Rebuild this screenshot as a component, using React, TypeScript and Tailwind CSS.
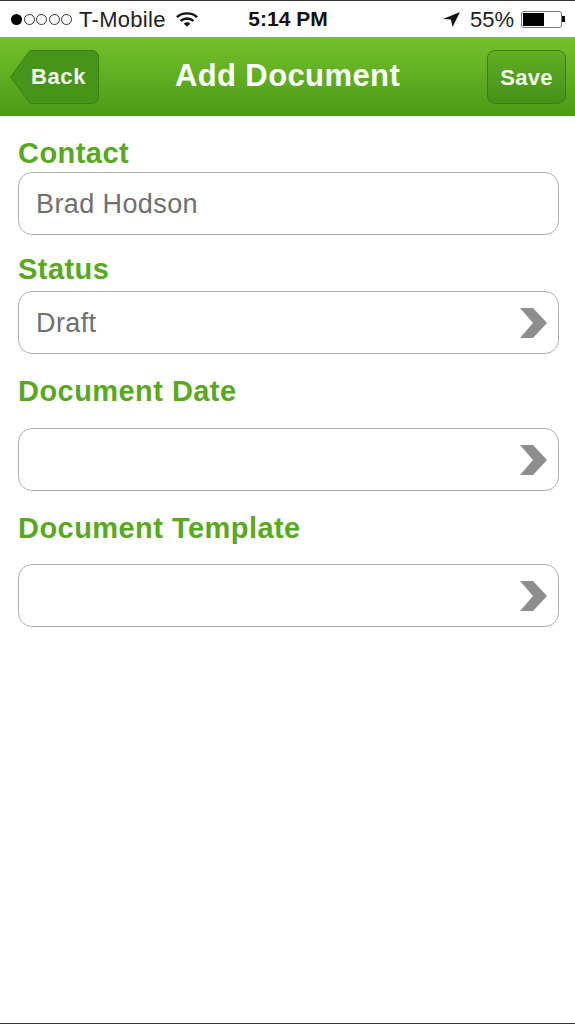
import { ReactNode } from "react";

function Chevron() {
  return (
    <svg width="27" height="30" viewBox="0 0 27 30" className="shrink-0">
      <path d="M0 0H13L27 15L13 30H0L13 15Z" fill="#8e8e8e" />
    </svg>
  );
}

function Field({ children, arrow }: { children?: ReactNode; arrow?: boolean }) {
  return (
    <div className="mx-[18px] flex h-[63px] w-[541px] items-center justify-between rounded-[14px] border border-[#b0b0b0] bg-white pl-[17px] pr-[11px] text-[27px] tracking-[0.4px] text-[#6f6f6f]">
      <span className="pt-[1px]">{children}</span>
      {arrow && <Chevron />}
    </div>
  );
}

function Label({ children, className }: { children: ReactNode; className: string }) {
  return (
    <div className={`px-[18px] text-[29px] font-bold leading-[34px] tracking-[0.45px] text-[#58a822] ${className}`}>
      {children}
    </div>
  );
}

export default function App() {
  return (
    <div className="flex h-[1024px] w-[575px] flex-col overflow-hidden bg-white font-['Liberation_Sans',sans-serif]">
      {/* Status bar */}
      <div className="flex h-[37px] items-center justify-between border-t border-[#333] bg-white pl-[11px] pr-[10px] text-[22px] text-[#222]">
        <div className="flex w-[200px] items-center">
          <div className="flex items-center gap-[1.5px]">
            <span className="h-[11px] w-[11px] rounded-full bg-black" />
            {[0, 1, 2, 3].map((i) => (
              <span key={i} className="h-[11px] w-[11px] rounded-full border border-[#333]" />
            ))}
          </div>
          <span className="ml-[7px] tracking-[0.3px]">T-Mobile</span>
          <svg width="22" height="17" viewBox="0 0 24 18" className="ml-[10px]">
            <path d="M1 6.5C7 1 17 1 23 6.5" fill="none" stroke="#111" strokeWidth="2.6" />
            <path d="M5 10.5C9 7 15 7 19 10.5" fill="none" stroke="#111" strokeWidth="2.6" />
            <path d="M8.5 13.5C10.5 11.5 13.5 11.5 15.5 13.5L12 17Z" fill="#111" />
          </svg>
        </div>
        <span className="text-[21px] font-bold text-[#111]">5:14 PM</span>
        <div className="flex w-[200px] items-center justify-end">
          <svg width="17" height="15" viewBox="0 0 17 15">
            <path d="M17 0L0 7L8 7.5L9.5 15Z" fill="#111" />
          </svg>
          <span className="ml-[10px]">55%</span>
          <div className="ml-[7px] flex h-[17px] w-[41px] items-center rounded-[3px] border border-[#777] p-[1px]">
            <div className="h-full w-[21px] bg-black" />
          </div>
          <div className="h-[6px] w-[3px] bg-black" />
        </div>
      </div>

      {/* Nav bar */}
      <div className="relative flex h-[79px] items-center justify-center bg-gradient-to-b from-[#74c12a] to-[#4d9a18]">
        <span className="text-[31px] font-bold tracking-[0.4px] text-white">Add Document</span>
        <div className="absolute left-[10px] top-[13px] flex h-[54px] w-[89px] items-center justify-end pr-[13px]">
          <svg width="89" height="54" viewBox="0 0 89 54" className="absolute inset-0">
            <path
              d="M20 .5H82A6.5 6.5 0 0 1 88.5 7V47A6.5 6.5 0 0 1 82 53.5H20L.5 27Z"
              fill="#46951a"
              stroke="#3a7f18"
            />
          </svg>
          <span className="relative mb-[2px] text-[22px] font-bold tracking-[0.6px] text-[#f4f9ee]">Back</span>
        </div>
        <div className="absolute left-[487px] top-[13px] flex h-[54px] w-[79px] items-center justify-center rounded-[8px] border border-[#3d7f19] bg-gradient-to-b from-[#62ae24] to-[#45911a]">
          <span className="text-[22px] font-bold tracking-[0.3px] text-[#f4f9ee]">Save</span>
        </div>
      </div>

      {/* Form */}
      <Label className="mt-[20px] mb-[2px]">Contact</Label>
      <Field>Brad Hodson</Field>
      <Label className="mt-[17px] mb-[5px]">Status</Label>
      <Field arrow>Draft</Field>
      <Label className="mt-[20px] mb-[20px]">Document Date</Label>
      <Field arrow />
      <Label className="mt-[20px] mb-[19px]">Document Template</Label>
      <Field arrow />

      <div className="mt-auto h-[1px] bg-[#333]" />
    </div>
  );
}
